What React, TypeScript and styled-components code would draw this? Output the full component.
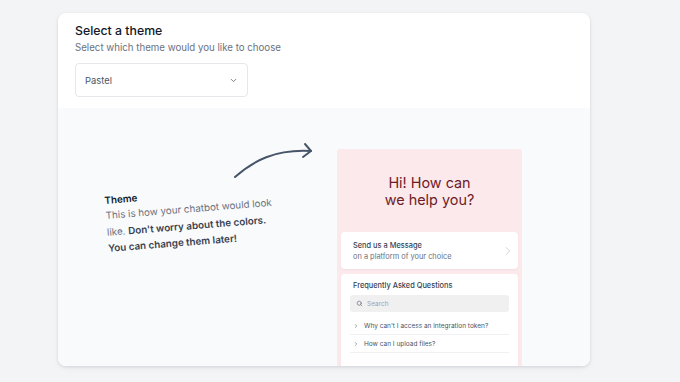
import React, { FC } from "react";
import styled, { createGlobalStyle } from "styled-components";

const GlobalStyle = createGlobalStyle`
  html, body {
    margin: 0;
    padding: 0;
    background: #f3f4f6;
    font-family: Inter, "Noto Sans", "Liberation Sans", sans-serif;
  }
`;

const Page = styled.div`
  width: 680px;
  height: 382px;
  padding: 13px 0 0 58px;
  box-sizing: border-box;
`;

const Card = styled.div`
  width: 532px;
  height: 353px;
  background: #ffffff;
  border-radius: 8px;
  box-shadow: 0 1px 3px rgba(15, 23, 42, 0.1), 0 2px 6px rgba(15, 23, 42, 0.05);
  overflow: hidden;
  display: flex;
  flex-direction: column;
`;

const Header = styled.div`
  padding: 9px 17px 11px;
  display: flex;
  flex-direction: column;
`;

const Title = styled.h2`
  margin: 0;
  font-size: 12.3px;
  line-height: 18px;
  font-weight: 500;
  color: #111827;
`;

const Subtitle = styled.p`
  margin: 0;
  font-size: 9.7px;
  line-height: 15px;
  color: #6b7280;
`;

const SelectBox = styled.div`
  margin-top: 8px;
  width: 173px;
  height: 34px;
  box-sizing: border-box;
  border: 1px solid #e5e7eb;
  border-radius: 4px;
  padding: 0 9px;
  display: flex;
  align-items: center;
  justify-content: space-between;
  font-size: 9.4px;
  color: #4b5563;
`;

const Lower = styled.div`
  flex: 1;
  background: #f9fafb;
  display: flex;
  align-items: flex-start;
`;

const LeftCol = styled.div`
  width: 279px;
  padding-top: 34px;
  display: flex;
  flex-direction: column;
`;

const ArrowWrap = styled.div`
  margin-left: 175px;
  width: 82px;
  height: 38px;
  color: #475569;
`;

const Note = styled.div`
  margin: 14px 0 0 46px;
  width: 172px;
  transform: rotate(-4.5deg);
  transform-origin: left top;
  font-size: 9.8px;
  line-height: 16.5px;
  color: #6b7280;
`;

const NoteTitle = styled.div`
  font-weight: 600;
  color: #111827;
  line-height: 14px;
`;

const Strong = styled.span`
  font-weight: 600;
  color: #374151;
`;

const Preview = styled.div`
  margin-top: 41px;
  width: 185px;
  height: 260px;
  background: #fbe9ec;
  border-radius: 3px 3px 0 0;
  padding: 0 4px;
  box-sizing: border-box;
  display: flex;
  flex-direction: column;
`;

const Greeting = styled.h1`
  margin: 25px 0 0;
  text-align: center;
  font-size: 14.4px;
  line-height: 17px;
  font-weight: 400;
  color: #6e1b27;
`;

const Panel = styled.div<{ $gap?: number }>`
  margin-top: ${({ $gap }) => $gap ?? 5}px;
  background: #ffffff;
  border-radius: 4px;
  box-shadow: 0 1px 2px rgba(122, 31, 43, 0.06);
`;

const MessageRow = styled.div`
  height: 37px;
  padding: 0 3px 0 12px;
  display: flex;
  align-items: center;
  justify-content: space-between;
`;

const MessageText = styled.div`
  display: flex;
  flex-direction: column;
`;

const MessageTitle = styled.div`
  font-size: 7.4px;
  line-height: 11px;
  font-weight: 500;
  color: #374151;
`;

const MessageSub = styled.div`
  font-size: 7.4px;
  line-height: 11px;
  color: #6b7280;
`;

const Faq = styled.div`
  padding: 6px 9px 20px;
  display: flex;
  flex-direction: column;
`;

const FaqTitle = styled.div`
  font-size: 7.4px;
  line-height: 11px;
  font-weight: 500;
  color: #374151;
  padding-left: 3px;
`;

const Search = styled.div`
  margin-top: 4px;
  height: 17px;
  background: #f0f0f1;
  border-radius: 3px;
  display: flex;
  align-items: center;
  gap: 4px;
  padding: 0 6px;
  font-size: 6.5px;
  color: #9ca3af;
`;

const FaqList = styled.div`
  margin-top: 5px;
  display: flex;
  flex-direction: column;
`;

const FaqItem = styled.div`
  height: 17px;
  border-bottom: 1px solid #f1f1f3;
  display: flex;
  align-items: center;
  gap: 5px;
  padding-left: 3px;
  font-size: 6.5px;
  color: #4b5563;
`;

const Chevron: FC<{ size: number; dir: "down" | "right"; color: string; width?: number }> = ({
  size,
  dir,
  color,
  width = 1.5,
}) => (
  <svg width={size} height={size} viewBox="0 0 24 24" fill="none" stroke={color} strokeWidth={width} strokeLinecap="round" strokeLinejoin="round">
    {dir === "down" ? <path d="m6 9 6 6 6-6" /> : <path d="m9 18 6-6-6-6" />}
  </svg>
);

const faqs = ["Why can't I access an integration token?", "How can I upload files?"];

export default function App() {
  return (
    <>
      <GlobalStyle />
      <Page>
        <Card>
          <Header>
            <Title>Select a theme</Title>
            <Subtitle>Select which theme would you like to choose</Subtitle>
            <SelectBox>
              <span>Pastel</span>
              <Chevron size={9} dir="down" color="#4b5563" width={2} />
            </SelectBox>
          </Header>
          <Lower>
            <LeftCol>
              <ArrowWrap>
                <svg width="82" height="38" viewBox="0 0 82 38" fill="none" stroke="currentColor" strokeWidth="2" strokeLinecap="round" strokeLinejoin="round">
                  <path d="M2 35 C 20 19, 42 7, 78 9" />
                  <path d="M72 2 L78 9 L70 15" />
                </svg>
              </ArrowWrap>
              <Note>
                <NoteTitle>Theme</NoteTitle>
                This is how your chatbot would look like.{" "}
                <Strong>Don't worry about the colors. You can change them later!</Strong>
              </Note>
            </LeftCol>
            <Preview>
              <Greeting>
                Hi! How can
                <br />
                we help you?
              </Greeting>
              <Panel $gap={24}>
                <MessageRow>
                  <MessageText>
                    <MessageTitle>Send us a Message</MessageTitle>
                    <MessageSub>on a platform of your choice</MessageSub>
                  </MessageText>
                  <Chevron size={14} dir="right" color="#c7c9cc" width={1.3} />
                </MessageRow>
              </Panel>
              <Panel>
                <Faq>
                  <FaqTitle>Frequently Asked Questions</FaqTitle>
                  <Search>
                    <svg width="7" height="7" viewBox="0 0 24 24" fill="none" stroke="#6b7280" strokeWidth="2.5" strokeLinecap="round">
                      <circle cx="11" cy="11" r="7" />
                      <path d="m20 20-4-4" />
                    </svg>
                    Search
                  </Search>
                  <FaqList>
                    {faqs.map((q) => (
                      <FaqItem key={q}>
                        <Chevron size={6} dir="right" color="#6b7280" width={2.5} />
                        {q}
                      </FaqItem>
                    ))}
                  </FaqList>
                </Faq>
              </Panel>
            </Preview>
          </Lower>
        </Card>
      </Page>
    </>
  );
}
